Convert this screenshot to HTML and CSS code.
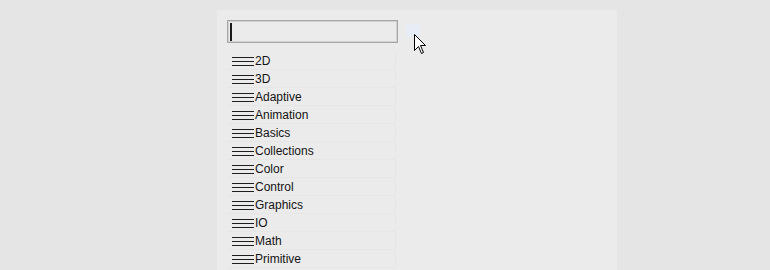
FILE: index.html
```html
<!DOCTYPE html>
<html>
<head>
<meta charset="utf-8">
<link rel="stylesheet" href="styles.css">
</head>
<body>
<div class="panel">
  <div class="toolbar">
    <div class="search"><span class="caret"></span></div>
    <div class="btn"></div>
  </div>
  <ul class="list">
    <li class="row"><svg class="ham" width="22" height="18" viewBox="0 0 22 18"><rect x="0" y="5" width="22" height="1"/><rect x="0" y="9" width="22" height="1"/><rect x="0" y="13" width="22" height="1"/></svg><span>2D</span></li>
    <li class="row"><svg class="ham" width="22" height="18" viewBox="0 0 22 18"><rect x="0" y="5" width="22" height="1"/><rect x="0" y="9" width="22" height="1"/><rect x="0" y="13" width="22" height="1"/></svg><span>3D</span></li>
    <li class="row"><svg class="ham" width="22" height="18" viewBox="0 0 22 18"><rect x="0" y="5" width="22" height="1"/><rect x="0" y="9" width="22" height="1"/><rect x="0" y="13" width="22" height="1"/></svg><span>Adaptive</span></li>
    <li class="row"><svg class="ham" width="22" height="18" viewBox="0 0 22 18"><rect x="0" y="5" width="22" height="1"/><rect x="0" y="9" width="22" height="1"/><rect x="0" y="13" width="22" height="1"/></svg><span>Animation</span></li>
    <li class="row"><svg class="ham" width="22" height="18" viewBox="0 0 22 18"><rect x="0" y="5" width="22" height="1"/><rect x="0" y="9" width="22" height="1"/><rect x="0" y="13" width="22" height="1"/></svg><span>Basics</span></li>
    <li class="row"><svg class="ham" width="22" height="18" viewBox="0 0 22 18"><rect x="0" y="5" width="22" height="1"/><rect x="0" y="9" width="22" height="1"/><rect x="0" y="13" width="22" height="1"/></svg><span>Collections</span></li>
    <li class="row"><svg class="ham" width="22" height="18" viewBox="0 0 22 18"><rect x="0" y="5" width="22" height="1"/><rect x="0" y="9" width="22" height="1"/><rect x="0" y="13" width="22" height="1"/></svg><span>Color</span></li>
    <li class="row"><svg class="ham" width="22" height="18" viewBox="0 0 22 18"><rect x="0" y="5" width="22" height="1"/><rect x="0" y="9" width="22" height="1"/><rect x="0" y="13" width="22" height="1"/></svg><span>Control</span></li>
    <li class="row"><svg class="ham" width="22" height="18" viewBox="0 0 22 18"><rect x="0" y="5" width="22" height="1"/><rect x="0" y="9" width="22" height="1"/><rect x="0" y="13" width="22" height="1"/></svg><span>Graphics</span></li>
    <li class="row"><svg class="ham" width="22" height="18" viewBox="0 0 22 18"><rect x="0" y="5" width="22" height="1"/><rect x="0" y="9" width="22" height="1"/><rect x="0" y="13" width="22" height="1"/></svg><span>IO</span></li>
    <li class="row"><svg class="ham" width="22" height="18" viewBox="0 0 22 18"><rect x="0" y="5" width="22" height="1"/><rect x="0" y="9" width="22" height="1"/><rect x="0" y="13" width="22" height="1"/></svg><span>Math</span></li>
    <li class="row"><svg class="ham" width="22" height="18" viewBox="0 0 22 18"><rect x="0" y="5" width="22" height="1"/><rect x="0" y="9" width="22" height="1"/><rect x="0" y="13" width="22" height="1"/></svg><span>Primitive</span></li>
  </ul>
  <svg class="pointer" width="13" height="21" viewBox="0 0 13 21"><path d="M0.5 0.5 L0.5 16.5 L4.5 12.5 L7.5 19.5 L9.5 18.5 L6.5 11.5 L11.5 11.5 Z" fill="#fff" stroke="#000" stroke-width="1" stroke-linejoin="miter"/></svg>
</div>
</body>
</html>
```
FILE: styles.css
```css
html, body {
  margin: 0;
  padding: 0;
  background: #e5e5e5;
  overflow: hidden;
}
body {
  height: 270px;
  font-family: "Liberation Sans", Arial, sans-serif;
}
.panel {
  position: relative;
  margin: 10px 0 0 217px;
  width: 390px;
  height: 250px;
  padding: 10px 0 0 10px;
  background: #ebebeb;
}
.toolbar {
  display: flex;
  align-items: flex-start;
  gap: 8px;
}
.search {
  box-sizing: border-box;
  width: 171px;
  height: 23px;
  border: 1px solid #a6a6a6;
  box-shadow: inset 0 0 0 1px #d2d2d2;
  background: #ebebeb;
  padding: 2px 0 0 2px;
}
.caret {
  display: block;
  width: 2px;
  height: 18px;
  background: #1a1a1a;
}
.btn {
  box-sizing: border-box;
  width: 14px;
  height: 14px;
  margin-top: 4px;
  background: #e7edf6;
  border: 1px solid #e9ecf1;
}
.list {
  list-style: none;
  margin: 9px 0 0 0;
  padding: 0;
  width: 169px;
}
.row {
  box-sizing: border-box;
  height: 18px;
  display: flex;
  align-items: center;
  padding-left: 5px;
  border-bottom: 1px solid #e6e6e6;
  border-right: 1px solid #e6e6e6;
  font-size: 12px;
  color: #141414;
}
.row span {
  margin-left: 1px;
  line-height: 18px;
}
.ham {
  display: block;
  fill: #1e1e1e;
  flex: none;
}
.pointer {
  position: absolute;
  left: 197px;
  top: 24px;
}
```
